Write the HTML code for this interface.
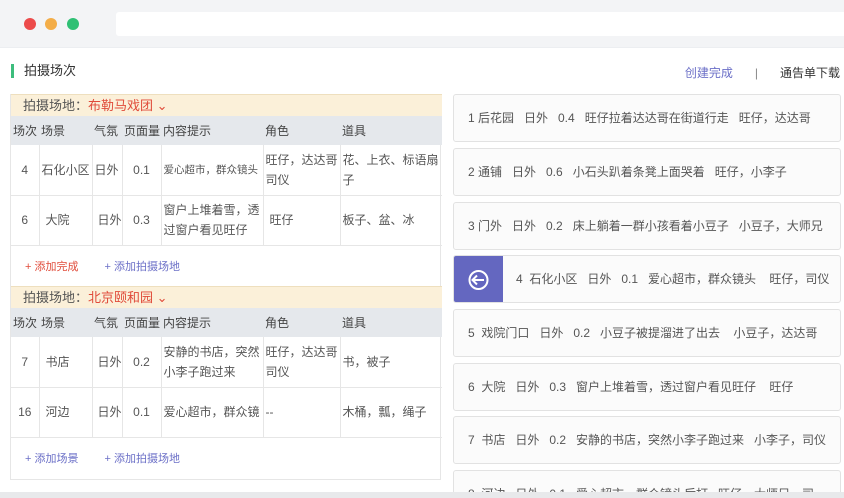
<!DOCTYPE html><html><head><meta charset="utf-8"><style>
*{box-sizing:border-box;margin:0;padding:0}
html,body{width:844px;height:498px;overflow:hidden}
body{background:#fff;font-family:"Liberation Sans","Noto Sans CJK SC",sans-serif;font-size:12px;color:#555;position:relative}
.wrap{position:absolute;left:0;top:0;width:844px;height:492px;overflow:hidden}
.top{position:absolute;left:0;top:0;width:844px;height:48px;background:#f3f4f6;border-bottom:1px solid #eceef1}
.dot{position:absolute;top:18px;width:12px;height:12px;border-radius:50%}
.addr{position:absolute;left:116px;top:12px;right:0;height:24px;background:#fff;border-radius:3px 0 0 3px}
.title{position:absolute;left:11px;top:64px;font-size:13px;color:#333;padding-left:10px;border-left:3px solid #3dbd7d;line-height:14px}
.links{position:absolute;right:4px;top:64px;font-size:12px}
.panel{position:absolute;left:10px;top:94px;width:431px;height:386px;border:1px solid #e6e6e6;border-top:none}
.band{position:absolute;left:0;width:431px;height:22px;background:#fbf0d9;border-top:1px solid #eedfbe;font-size:13px;color:#555;padding-left:12px;line-height:21px}
.band span{color:#e04b3a}
table{position:absolute;left:0;width:431px;border-collapse:collapse;table-layout:fixed}
th{background:#e5e8ec;font-weight:normal;color:#444;text-align:left;height:29px;padding-left:2px;font-size:12px;white-space:nowrap;overflow:hidden}
td{border:1px solid #e6e6e6;border-top:none;padding:0 2px;line-height:20px;vertical-align:middle;height:50px;font-size:12px;overflow:hidden}
td.n{white-space:nowrap}
td:first-child{border-left:none}td:last-child{border-right:none}
.add{position:absolute;left:14px;font-size:11px;color:#6b6fc7}
.add b{font-weight:normal;margin-right:26px}
.card{position:absolute;left:453px;width:388px;height:48px;border:1px solid #e2e2e2;border-radius:3px;background:#fbfbfb;padding-left:14px;line-height:46px;white-space:nowrap;overflow:hidden;font-size:12px;color:#555}
.card.act{padding-left:62px}
.act .ic{position:absolute;left:0;top:0;width:49px;height:48px;background:#6467c0}
.bot{position:absolute;left:0;top:492px;width:844px;height:6px;background:#e8e9eb}
</style></head><body>
<div class="wrap">
<div class="top"><div class="dot" style="left:24px;background:#ec4b4b"></div><div class="dot" style="left:45px;background:#f3ad48"></div><div class="dot" style="left:67px;background:#2fc074"></div><div class="addr"></div></div>
<div class="title">拍摄场次</div>
<div class="links"><span style="color:#6b6fc7">创建完成</span><span style="margin:0 22px;color:#888">|</span><span style="color:#333">通告单下载</span></div>
<div class="panel">
<div class="band" style="top:0">拍摄场地：<span>布勒马戏团 ⌄</span></div>
<table style="top:22px"><colgroup><col style="width:28px"><col style="width:53px"><col style="width:30px"><col style="width:39px"><col style="width:102px"><col style="width:77px"><col></colgroup>
<tr><th>场次</th><th>场景</th><th>气氛</th><th>页面量</th><th>内容提示</th><th>角色</th><th>道具</th></tr>
<tr><td class="n" style="text-align:center">4</td><td class="n">石化小区</td><td class="n">日外</td><td class="n" style="text-align:center">0.1</td><td class="n" style="font-size:10.5px">爱心超市，群众镜头</td><td>旺仔，达达哥司仪</td><td>花、上衣、标语扇子</td></tr>
<tr><td class="n" style="text-align:center">6</td><td class="n" style="padding-left:6px">大院</td><td class="n" style="padding-left:5px">日外</td><td class="n" style="text-align:center">0.3</td><td>窗户上堆着雪，透过窗户看见旺仔</td><td style="padding-left:6px">旺仔</td><td>板子、盆、冰</td></tr>
</table>
<div class="add" style="top:164px"><b style="color:#e04b3a">+ 添加完成</b><b>+ 添加拍摄场地</b></div>
<div class="band" style="top:192px">拍摄场地：<span>北京颐和园 ⌄</span></div>
<table style="top:214px"><colgroup><col style="width:28px"><col style="width:53px"><col style="width:30px"><col style="width:39px"><col style="width:102px"><col style="width:77px"><col></colgroup>
<tr><th>场次</th><th>场景</th><th>气氛</th><th>页面量</th><th>内容提示</th><th>角色</th><th>道具</th></tr>
<tr><td class="n" style="text-align:center">7</td><td class="n" style="padding-left:6px">书店</td><td class="n" style="padding-left:5px">日外</td><td class="n" style="text-align:center">0.2</td><td>安静的书店，突然小李子跑过来</td><td>旺仔，达达哥司仪</td><td>书，被子</td></tr>
<tr><td class="n" style="text-align:center">16</td><td class="n" style="padding-left:6px">河边</td><td class="n" style="padding-left:5px">日外</td><td class="n" style="text-align:center">0.1</td><td class="n">爱心超市，群众镜</td><td>--</td><td>木桶，瓢，绳子</td></tr>
</table>
<div class="add" style="top:356px"><b>+ 添加场景</b><b>+ 添加拍摄场地</b></div>
</div>
<div class="card" style="top:94px">1 后花园 &nbsp; 日外 &nbsp; 0.4 &nbsp; 旺仔拉着达达哥在街道行走 &nbsp; 旺仔，达达哥</div>
<div class="card" style="top:148px">2 通铺 &nbsp; 日外 &nbsp; 0.6 &nbsp; 小石头趴着条凳上面哭着 &nbsp; 旺仔，小李子</div>
<div class="card" style="top:202px">3 门外 &nbsp; 日外 &nbsp; 0.2 &nbsp; 床上躺着一群小孩看着小豆子 &nbsp; 小豆子，大师兄</div>
<div class="card act" style="top:255px"><div class="ic"><svg width="49" height="48" viewBox="0 0 49 48"><circle cx="24.5" cy="24" r="9" fill="none" stroke="#fff" stroke-width="2"/><path d="M30 24H19M23 19.5L18.5 24L23 28.5" fill="none" stroke="#fff" stroke-width="2"/></svg></div>4 &nbsp;石化小区 &nbsp; 日外 &nbsp; 0.1 &nbsp; 爱心超市，群众镜头 &nbsp; &nbsp;旺仔，司仪</div>
<div class="card" style="top:309px">5 &nbsp;戏院门口 &nbsp; 日外 &nbsp; 0.2 &nbsp; 小豆子被提溜进了出去 &nbsp; &nbsp;小豆子，达达哥</div>
<div class="card" style="top:363px">6 &nbsp;大院 &nbsp; 日外 &nbsp; 0.3 &nbsp; 窗户上堆着雪，透过窗户看见旺仔 &nbsp; &nbsp;旺仔</div>
<div class="card" style="top:416px">7 &nbsp;书店 &nbsp; 日外 &nbsp; 0.2 &nbsp; 安静的书店，突然小李子跑过来 &nbsp; 小李子，司仪</div>
<div class="card" style="top:470px">8 &nbsp;河边 &nbsp; 日外 &nbsp; 0.1 &nbsp; 爱心超市，群众镜头后打 &nbsp; 旺仔，大师兄，司</div>
</div>
<div class="bot"></div>
</body></html>
